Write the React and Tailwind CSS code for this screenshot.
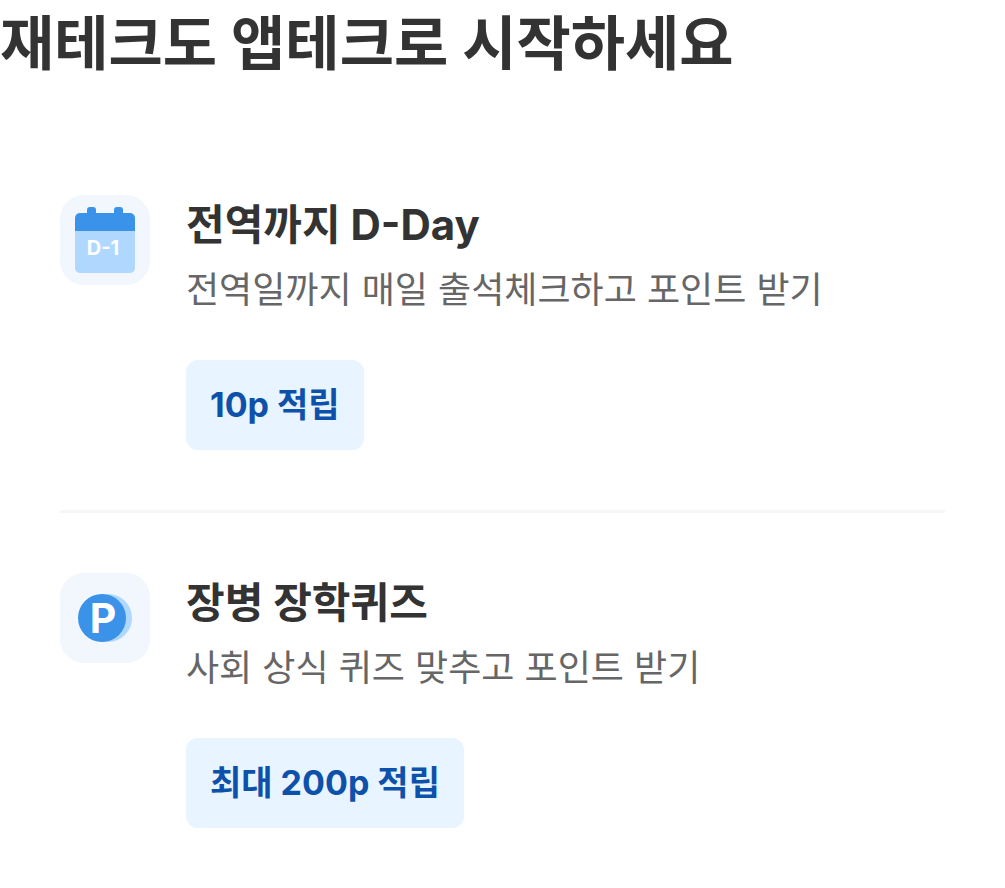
const items = [
  {
    icon: 'calendar',
    title: '전역까지 D-Day',
    description: '전역일까지 매일 출석체크하고 포인트 받기',
    reward: '10p 적립',
  },
  {
    icon: 'point',
    title: '장병 장학퀴즈',
    description: '사회 상식 퀴즈 맞추고 포인트 받기',
    reward: '최대 200p 적립',
  },
];

function CalendarIcon() {
  return (
    <svg viewBox="0 0 90 90" className="size-full" aria-hidden="true">
      <rect x="15" y="20" width="60" height="58" rx="5" fill="#b0d8ff" />
      <path d="M15 36V23a5 5 0 0 1 5-5h50a5 5 0 0 1 5 5v13Z" fill="#3b92e9" />
      <rect x="27" y="12" width="9" height="12" rx="3" fill="#3b92e9" />
      <rect x="54" y="12" width="9" height="12" rx="3" fill="#3b92e9" />
      <text x="43" y="60" textAnchor="middle" fill="#fff" fontSize="20" fontWeight="700" fontFamily="Inter, sans-serif">D-1</text>
    </svg>
  );
}

function PointIcon() {
  return (
    <svg viewBox="0 0 90 90" className="size-full" aria-hidden="true">
      <circle cx="48" cy="45" r="24" fill="#b0d8ff" />
      <circle cx="42" cy="45" r="24" fill="#3b92e9" />
      <text x="43" y="60" textAnchor="middle" fill="#fff" fontSize="41" fontWeight="700" fontFamily="Inter, sans-serif">P</text>
    </svg>
  );
}

export default function App() {
  return (
    <main className="bg-white font-['Inter','Noto_Sans_CJK_KR',sans-serif] text-[#333333]">
      <h1 className="text-[59px] leading-[88px] font-bold">재테크도 앱테크로 시작하세요</h1>
      <ul className="px-[60px] pt-[47px]">
        {items.map((item) => (
          <li key={item.title} className="flex gap-9 border-b-[3px] border-[#f5f6f8] py-[60px] last:border-b-0">
            <div className="size-[90px] shrink-0 rounded-3xl bg-[#f2f7fe]">
              {item.icon === 'calendar' ? <CalendarIcon /> : <PointIcon />}
            </div>
            <div className="flex flex-col items-start">
              <h2 className="text-[42px] leading-[60px] font-bold">{item.title}</h2>
              <p className="mt-2 text-[36px] leading-[54px] text-[#666666]">{item.description}</p>
              <span className="mt-[43px] rounded-xl bg-[#e8f4ff] px-6 text-[34px] leading-[90px] font-bold text-[#0e51ab]">{item.reward}</span>
            </div>
          </li>
        ))}
      </ul>
    </main>
  );
}
